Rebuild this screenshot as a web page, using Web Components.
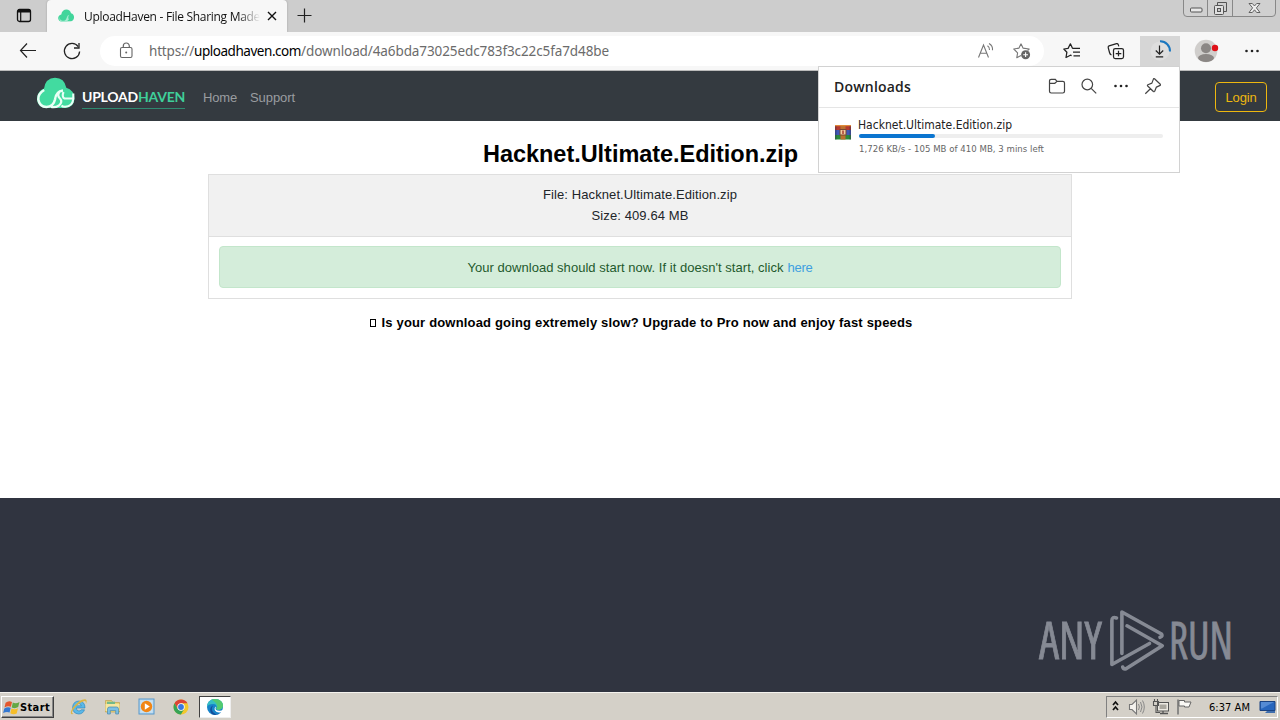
<!DOCTYPE html>
<html lang="en">
<head>
<meta charset="utf-8">
<title>UploadHaven - File Sharing Made Easy</title>
<style>
  body {
    margin: 0;
    width: 1280px;
    height: 720px;
    overflow: hidden;
    font-family: "Liberation Sans", Arial, sans-serif;
  }
</style>
</head>
<body>
<desktop-screen></desktop-screen>

<script>
// one line of text, tracked out (or in) to the given width
class FitText extends HTMLElement {
    constructor() {
        super()
        this.shadow = this.attachShadow({mode: 'open'})
    }

    connectedCallback() {
        this.shadow.innerHTML = `
        <style>
          :host { display: block; flex: none; white-space: nowrap; width: max-content; }
        </style>
        <slot></slot>`
        const w = Number(this.getAttribute('w'))
        const natural = this.getBoundingClientRect().width
        const count = this.textContent.length
        this.style.letterSpacing = (w - natural) / count + 'px'
    }
}

const ICONS = {
    tabs: `<rect x="2.5" y="2.5" width="13" height="12" rx="2" fill="none" stroke="#111" stroke-width="1.3"/><path d="M2.5 5V4a2 2 0 0 1 2-2h9a2 2 0 0 1 2 2v1.600H2.500z" fill="#111"/><path d="M5.700 5v9" stroke="#111" stroke-width="1.200"/>`,
    close: `<path d="M5 5l8 8M13 5l-8 8" stroke="#111" stroke-width="1.400"/>`,
    plus: `<path d="M8.500 1.500v14M1.500 8.500h14" stroke="#222" stroke-width="1.200"/>`,
    back: `<path d="M17 8.500H1.500M8 1.500L1.500 8.500 8 15.500" fill="none" stroke="#222" stroke-width="1.200"/>`,
    reload: `<path d="M15.200 4.600A7.600 7.600 0 1 0 16.600 9.500" fill="none" stroke="#222" stroke-width="1.300"/><path d="M16 1v5h-5" fill="none" stroke="#222" stroke-width="1.300"/>`,
    lock: `<rect x="3.500" y="5.500" width="11.500" height="10" rx="1.500" fill="none" stroke="#666" stroke-width="1.100"/><path d="M6.300 5.500V4a3 3 0 0 1 6 0v1.500" fill="none" stroke="#666" stroke-width="1.200"/><circle cx="9.200" cy="10.500" r="1" fill="#666"/>`,
    read: `<path d="M1.500 15.500L6.500 3l5 12.500M3.300 11.200h6.500" fill="none" stroke="#777" stroke-width="1.100"/><path d="M10.500 3.700q2.300 1.500 2 4.300M12 1.500q4 2.200 3.500 6.800" fill="none" stroke="#777" stroke-width="1.100"/>`,
    staradd: `<path d="M8 1.800l2 4.300 6.200.9-1.600 1.500M8 13.500l-4.200 2.200.8-4.800L.8 7l5.200-.9 2-4.300" fill="none" stroke="#777" stroke-width="1.100" stroke-linejoin="round"/><circle cx="12.600" cy="12.700" r="4.500" fill="#666"/><path d="M12.600 10.300v4.800M10.200 12.700h4.800" stroke="#fff" stroke-width="1.100"/>`,
    favs: `<path d="M9.600 6.400L7.400 1.800 5.100 6.400.8 7l3.100 3.200-.9 5.300 4.400-2.300 1.200.5M9.600 6.400H17M10 10.200h7M10.500 13.900H17" fill="none" stroke="#222" stroke-width="1.250" stroke-linejoin="round"/>`,
    collections: `<rect x="6.500" y="6.500" width="10" height="10" rx="1.800" fill="none" stroke="#222" stroke-width="1.250"/><path d="M11.500 8.700v5.600M8.700 11.500h5.600" stroke="#222" stroke-width="1.250"/><path d="M4.500 13Q3 12.500 2.500 10.500L1.200 5.500Q1 4.300 2.100 3.900L9.500 1.700q1.300-.3 1.800 1l.5 1.700" fill="none" stroke="#222" stroke-width="1.200"/>`,
    download: `<circle cx="10" cy="10" r="9.500" fill="#dedede"/><path d="M10 .3A9.700 9.700 0 0 1 20 10.500" fill="none" stroke="#1976bf" stroke-width="2"/><path d="M9.500 4.500v8.500M5.800 9.500L9.500 13.200l3.700-3.700M5.800 15.900h7.400" fill="none" stroke="#222" stroke-width="1.200"/>`,
    avatar: `<clipPath id="c"><circle cx="12" cy="12" r="11.300"/></clipPath><circle cx="12" cy="12" r="11.300" fill="#d0cecc"/><g clip-path="url(#c)" fill="#8b8785"><circle cx="12" cy="9.200" r="5"/><ellipse cx="12" cy="19" rx="8" ry="4"/></g><circle cx="21" cy="9" r="3.200" fill="#df1018"/>`,
    dots: `<g fill="#222"><circle cx="3.500" cy="9" r="1.300"/><circle cx="9" cy="9" r="1.300"/><circle cx="14.500" cy="9" r="1.300"/></g>`,
    folder: `<path d="M1.500 4.700v9.600q0 1.700 1.700 1.700h11.600q1.700 0 1.700-1.700V6q0-1.600-1.700-1.600H9L7.300 2.300H3.200q-1.700 0-1.700 1.700zM1.500 6.300h5.300L9 4.400" fill="none" stroke="#444" stroke-width="1.200"/>`,
    search: `<circle cx="7.300" cy="7.500" r="5.300" fill="none" stroke="#444" stroke-width="1.200"/><path d="M11.200 11.400l5 5" stroke="#444" stroke-width="1.300"/>`,
    pin: `<path d="M10.500 1.700l5.800 5.600q.5 1-.7 1.300l-3.200 1.500-1.700 4.200q-.5.800-1.300.2L3.700 9q-.7-.8.200-1.300l4-1.600 1.500-4q.4-.8 1.100-.4zM6.400 11.700L1.300 16.700" fill="none" stroke="#444" stroke-width="1.200" stroke-linejoin="round"/>`,
    cloud: `<path d="M8 29Q0 27.500 0 19.500 .5 12 7 9.500 8.500-.8 18-1.200 27.500-1 29.300 8.700 37 11 37.500 19.500 37 28 29 29z" fill="#42dba0"/><path d="M7.200 11Q1 14.500 1.300 20.500 2.500 27.800 9.500 28 16.500 27.500 18 20.500 19 12.500 26 11.500" fill="none" stroke="#eafff6" stroke-width="2.500"/><path d="M22.200 13Q20 17 23 19.500 26 23 22 26.500 18.500 28.800 14 28" fill="none" stroke="#eafff6" stroke-width="2.200"/><path d="M26.500 13Q24.500 18 27.500 19.500H37" fill="none" stroke="#eafff6" stroke-width="2.200"/><path d="M36.300 14.500V20Q35.500 27.500 28 27.800 25.500 27.700 24.500 26.500" fill="none" stroke="#eafff6" stroke-width="2.100"/>`,
    favicon: `<path d="M3 13.500C-1 12.500-.5 7 3.300 6.500 4-.3 12.500.3 13 5.300c4.200.8 4 7.200.2 8z" fill="#42d59b"/><path d="M3.300 7Q0 11 4 12.800q3.600.4 4.600-2.800.6-3 2.800-3.300Q9.300 9.500 11 11.300L8.500 13.800 3 13.500Q-.3 11 3.300 7z" fill="#a8ebd2"/>`,
    rar: `<path d="M1 1h16v5H1z" fill="#b5392f"/><path d="M1 6h16v5H1z" fill="#3f58b8"/><path d="M1 11h16v4.500H1z" fill="#2a8a3c"/><path d="M1 1h1.500v14.500H1zM15.500 1H17v14.500h-1.500z" fill="#343048" opacity=".4"/><path d="M6.500 1h5v14.500h-5z" fill="#b9702f"/><path d="M1 1h16v1.200H1z" fill="#e08a3a"/><rect x="6" y="5.500" width="6" height="5.500" fill="#f0cba0" stroke="#7a4630"/><path d="M8.300 6.500h1.400v3.500H8.300z" fill="#a3322a"/>`,
    windows: `<path d="M2.600 3.700Q5.800 1 9 3L7.900 7.800Q5 6.300 1.500 8.500z" fill="#e4572d"/><path d="M9.800 3.500q3 1.600 6.700-.6l-1.300 5.200Q12 10.200 8.700 8.500z" fill="#64a846"/><path d="M1.300 9.500q3.200-2.200 6.400-.8L6.600 13.500Q3.700 12 .1 14.100z" fill="#3478d1"/><path d="M8.500 9.400q3.400 1.700 6.500-.2L13.700 14.500Q10.400 16.300 7.300 14.200z" fill="#f6be29"/>`,
    ie: `<path d="M14.500 11.800Q13 16 8.700 16 2.700 15.500 2.600 9.500 3 3.200 9 3q6 .3 6 7H6.300q.1 3 2.700 3 1.500-.1 2.200-1.200zM6.400 7.800H11.300Q10.700 5.500 8.900 5.500 6.800 5.600 6.400 7.800z" fill="#5bb8e8" stroke="#2482bb" stroke-width=".6"/><path d="M1.800 16.300Q-.7 15.200 3 9.500 9.500 1 15.200 1.200q2.500.6.700 5 .3-3.500-1.500-3.200Q8 4.500 2.600 12.800q-1.500 3 .8 2.700Q2.800 16.500 1.800 16.300z" fill="#dcb544"/>`,
    explorer: `<path d="M1.500 2.500h6l1.500 2h6.500V14H1.500z" fill="#ead77c" stroke="#c2a04c" stroke-width=".7"/><path d="M3 3.700h8v6H3z" fill="#72b98a"/><path d="M1.500 6h14v7h-14z" fill="#f5e6a0"/><path d="M3.500 16v-5Q3.500 9 5.500 9h7q2 0 2 2v5h-2.800v-3.500H6.300V16z" fill="#7cc0e4" stroke="#4788ad" stroke-width=".7"/>`,
    player: `<rect x="1" y="1" width="15" height="15" fill="#b8d8ee" stroke="#5798cc"/><rect x="2.500" y="2.500" width="12" height="12" fill="#c9e2f4"/><circle cx="8.500" cy="8.500" r="5.700" fill="#f18616"/><path d="M6.800 5.300l5 3.200-5 3.200z" fill="#fff"/>`,
    chrome: `<circle cx="9" cy="9" r="7.500" fill="#f2c82d"/><path d="M2.500 5.250A7.500 7.500 0 0 1 15.500 5.250H9L5.800 10.900z" fill="#dc4436"/><path d="M2.500 5.250L5.800 10.900 9 12.800l-.1 3.700A7.500 7.500 0 0 1 2.500 5.250z" fill="#36a457"/><path d="M8.900 16.500L12.200 10.900 9 12.750 5.800 10.900z" fill="#36a457"/><circle cx="9" cy="9" r="3.700" fill="#fff"/><circle cx="9" cy="9" r="2.900" fill="#3978df"/>`,
    edge: `<circle cx="9" cy="9" r="8" fill="#1683c9"/><path d="M1 9C1 4 4.500 1 9 1c5 0 8 3 8 6.600 0 2.500-2 4.200-4.500 4.200-2 0-2.500-.8-2-1.800.7-2-.5-4-3.300-4C4 6 1.500 7 1 9z" fill="#36bfc3"/><path d="M9 1c5 0 8 3 8 6.600 0 2.500-2 4.200-4.500 4.200-2 0-2.500-.8-2-1.800 2.200-1.700-.4-6.200-5.200-8.200Q7 1 9 1z" fill="#53ca71"/><path d="M7 7.500q-3.500 5.500 2.500 8.500 3 .8 6-2.300Q12.500 17 9 17 4.500 16.500 4.200 12 4.300 8.500 7 7.500z" fill="#154d9a"/><path d="M10 8.500q-2 4.500 4 4.300 1.500 0 3-1.200l.8.900-1.800 1.500q-5 1.500-7-1.500Q7.800 10 10 8.500z" fill="#fff"/>`,
    chevrons: `<path d="M2 7l2.500-3L7 7M2 12l2.500-3L7 12" fill="none" stroke="#111" stroke-width="1.700"/>`,
    volume: `<path d="M1.500 6.500H4L8.500 2v14L4 11.500H1.500z" fill="#f4f2ee" stroke="#777" stroke-width="1.100"/><path d="M10.500 6q1.800 3 0 6M12.500 4q3 5 0 10M14.500 2.500q3.600 6.500 0 13" fill="none" stroke="#888"/>`,
    network: `<rect x="5.500" y="4.500" width="11" height="8.500" fill="#ece9e2" stroke="#555"/><rect x="7.500" y="6.500" width="7" height="4.500" fill="#aaa79f"/><path d="M8 15.500h8M11 13v2" stroke="#555" stroke-width="1.300"/><path d="M1.500 3.500h5v4h-5zM2.500 1v2.500M5.500 1v2.500M4 7.500v7h4" fill="none" stroke="#555" stroke-width="1.100"/>`,
    flag: `<path d="M3 16.500V1.500" stroke="#777" stroke-width="1.600"/><path d="M4 2.500h5.500v1.500H16L14 9H9.500V8H4z" fill="#faf9f5" stroke="#666"/>`,
    monitor: `<path d="M1 3.500h15v9H1z" fill="#2866bd" stroke="#1b4382"/><path d="M2 4h13L3 10.500H2z" fill="#558bd4"/><path d="M8 13h8v2H6z" fill="#3f6eae"/>`,
    min: `<rect x="6.500" y="8" width="11.500" height="4" rx="1" fill="#e8e8e8" stroke="#555"/>`,
    restore: `<path d="M9.500 5.500V2.500h9v9h-3" fill="none" stroke="#555"/><rect x="6.500" y="5.500" width="9" height="9" rx="1" fill="#e0e0e0" stroke="#555"/><rect x="9.500" y="8.500" width="3" height="3" fill="#ccc" stroke="#555"/>`,
    winclose: `<path d="M16 3.500h3.300l2.200 2.500L23.700 3.500H27l-3.600 4.400L27 12.500h-3.300l-2.200-2.700-2.200 2.700H16l3.600-4.600z" fill="#eee" stroke="#555" stroke-width=".9"/>`,
    anyrun: `<g fill="none" stroke="#868a94" stroke-width="3.600" stroke-linejoin="round" stroke-linecap="round"><path d="M6.500 8Q1.900 6.300 1.900 10.500V54.500L39.500 33.500"/><path d="M11.900 43.500V2L51.500 24Q53 26.500 50 27.300"/><path d="M17 15.800L52.300 35.700 16 58.800Q13.500 59.500 12.700 57"/></g>`
}

class UiIcon extends HTMLElement {
    constructor() {
        super()
        this.shadow = this.attachShadow({mode: 'open'})
    }

    connectedCallback() {
        const w = this.getAttribute('w') || 18
        const h = this.getAttribute('h') || 18
        this.shadow.innerHTML = `
        <style>
          :host { display: block; flex: none; width: ${w}px; height: ${h}px; }
          svg { display: block; overflow: visible; }
        </style>
        <svg width="${w}" height="${h}" viewBox="0 0 ${w} ${h}">${ICONS[this.getAttribute('name')]}</svg>`
    }
}

class TabStrip extends HTMLElement {
    constructor() {
        super()
        this.shadow = this.attachShadow({mode: 'open'})
    }

    connectedCallback() {
        this.shadow.innerHTML = `
        <style>
          :host { display: flex; height: 32px; background: #cdcdcd; font: 12px "Open Sans", "Noto Sans", sans-serif; color: #111; }
          .actions { width: 47px; display: flex; align-items: center; justify-content: center; }
          .tab { box-sizing: border-box; width: 240px; display: flex; align-items: center; padding: 0 7px 0 11px; background: #f7f7f7; border-radius: 4px 4px 0 0; box-shadow: 0 0 2px #999; clip-path: inset(0 -3px 0 -3px); }
          .title { width: 176px; margin: 0 3px 0 10px; -webkit-mask-image: linear-gradient(90deg, #000 154px, transparent 176px); mask-image: linear-gradient(90deg, #000 154px, transparent 176px); }
          .new { margin: 7px 0 0 9px; }
          .win { margin: -1px 4px 0 auto; height: 16px; display: flex; border: 1px solid #888; border-radius: 0 0 4px 4px; background: #d0d0d0; }
          .win ui-icon + ui-icon { border-left: 1px solid #888; }
        </style>
        <div class="actions"><ui-icon name="tabs"></ui-icon></div>
        <div class="tab">
          <ui-icon name="favicon" w="16" h="16"></ui-icon>
          <div class="title"><fit-text w="176">UploadHaven - File Sharing Made</fit-text></div>
          <ui-icon name="close"></ui-icon>
        </div>
        <ui-icon class="new" name="plus"></ui-icon>
        <div class="win">
          <ui-icon name="min" w="23" h="16"></ui-icon>
          <ui-icon name="restore" w="24" h="16"></ui-icon>
          <ui-icon name="winclose" w="42" h="16"></ui-icon>
        </div>`
    }
}

class AddressBar extends HTMLElement {
    constructor() {
        super()
        this.shadow = this.attachShadow({mode: 'open'})
    }

    connectedCallback() {
        this.shadow.innerHTML = `
        <style>
          :host { box-sizing: border-box; display: flex; align-items: center; height: 39px; padding: 0 8px; background: #f7f7f7; border-bottom: 1px solid #bbb; font: 13.500px "Noto Sans", "Open Sans", sans-serif; color: #6b6b6b; }
          .btn { width: 40px; height: 30px; display: flex; align-items: center; justify-content: center; }
          .btn + .btn { margin-left: 4px; }
          .pill { box-sizing: border-box; width: 944px; height: 30px; display: flex; align-items: center; margin: 0 8px; padding: 0 13px 0 17px; border-radius: 15px; background: #fff; }
          .url { display: flex; flex: 1; margin-left: 14px; }
          .url b { font-weight: normal; color: #000; }
          .star { margin-left: 18px; }
          .on { background: #d6d6d6; }
          .btn.me { margin-left: 6px; }
          .btn.more { margin-left: 6px; }
        </style>
        <div class="btn"><ui-icon name="back"></ui-icon></div>
        <div class="btn"><ui-icon name="reload"></ui-icon></div>
        <div class="pill">
          <ui-icon name="lock"></ui-icon>
          <div class="url">
            <fit-text w="45">https://</fit-text>
            <fit-text w="107"><b>uploadhaven.com</b></fit-text>
            <fit-text w="308">/download/4a6bda73025edc783f3c22c5fa7d48be</fit-text>
          </div>
          <ui-icon name="read"></ui-icon>
          <ui-icon class="star" name="staradd"></ui-icon>
        </div>
        <div class="btn"><ui-icon name="favs"></ui-icon></div>
        <div class="btn"><ui-icon name="collections"></ui-icon></div>
        <div class="btn on"><ui-icon name="download" w="20" h="20"></ui-icon></div>
        <div class="btn me"><ui-icon name="avatar" w="24" h="24"></ui-icon></div>
        <div class="btn more"><ui-icon name="dots"></ui-icon></div>`
    }
}

class SiteNav extends HTMLElement {
    constructor() {
        super()
        this.shadow = this.attachShadow({mode: 'open'})
    }

    connectedCallback() {
        this.shadow.innerHTML = `
        <style>
          :host { box-sizing: border-box; display: flex; align-items: center; height: 50px; padding: 0 13px 0 37px; background: #343a40; color: #9a9da0; font-size: 13px; }
          .logo { display: flex; align-items: center; margin: -3px 18px 0 0; }
          .word { display: flex; margin: 9px 0 0 7px; height: 19px; border-bottom: 1px solid #2f8a70; font: bold 14px/16px Lato, sans-serif; color: #fff; }
          .word .hv { color: #3fcf9a; }
          .links { display: flex; gap: 13px; margin-top: 3px; }
          .login { box-sizing: border-box; margin: 2px 0 0 auto; width: 52px; height: 30px; border: 1px solid #eeb70f; border-radius: 4px; display: flex; align-items: center; justify-content: center; color: #eeb70f; }
        </style>
        <div class="logo">
          <ui-icon name="cloud" w="38" h="31"></ui-icon>
          <div class="word"><fit-text w="56">UPLOAD</fit-text><fit-text class="hv" w="47">HAVEN</fit-text></div>
        </div>
        <div class="links"><fit-text w="34">Home</fit-text><fit-text w="45">Support</fit-text></div>
        <div class="login"><fit-text w="31">Login</fit-text></div>`
    }
}

class DownloadPage extends HTMLElement {
    constructor() {
        super()
        this.shadow = this.attachShadow({mode: 'open'})
    }

    connectedCallback() {
        this.shadow.innerHTML = `
        <style>
          :host { display: flex; flex-direction: column; align-items: center; height: 377px; background: #fff; color: #212529; font-size: 13px; line-height: 21px; }
          h1 { margin: 17px 0 4px 1px; font-size: 23.500px; line-height: 32px; color: #000; }
          .card { box-sizing: border-box; width: 864px; height: 125px; border: 1px solid #dfdfdf; }
          .head { box-sizing: border-box; height: 62px; padding-top: 9px; display: flex; flex-direction: column; align-items: center; background: #f1f1f1; border-bottom: 1px solid #dfdfdf; }
          .alert { box-sizing: border-box; height: 42px; margin: 9px 10px; display: flex; align-items: center; justify-content: center; gap: 4px; background: #d4edda; border: 1px solid #c3e6cb; border-radius: 4px; color: #1f5a2d; }
          .alert .link { color: #3f9fe0; }
          .tip { display: flex; align-items: center; gap: 6px; margin: 13px 0 0 2px; font-weight: bold; color: #000; }
          .tofu { box-sizing: border-box; width: 6px; height: 8px; border: 1px solid #000; }
        </style>
        <h1><fit-text w="315">Hacknet.Ultimate.Edition.zip</fit-text></h1>
        <div class="card">
          <div class="head">
            <fit-text w="194">File: Hacknet.Ultimate.Edition.zip</fit-text>
            <fit-text w="97">Size: 409.64 MB</fit-text>
          </div>
          <div class="alert">
            <fit-text w="316">Your download should start now. If it doesn't start, click</fit-text>
            <fit-text class="link" w="25">here</fit-text>
          </div>
        </div>
        <div class="tip"><span class="tofu"></span><fit-text w="531">Is your download going extremely slow? Upgrade to Pro now and enjoy fast speeds</fit-text></div>`
    }
}

class DownloadsFlyout extends HTMLElement {
    constructor() {
        super()
        this.shadow = this.attachShadow({mode: 'open'})
    }

    connectedCallback() {
        this.shadow.innerHTML = `
        <style>
          :host { box-sizing: border-box; display: block; width: 362px; height: 107px; background: #fff; border: 1px solid #d2d2d2; font-family: "DejaVu Sans Condensed", "DejaVu Sans", sans-serif; color: #222; }
          header { box-sizing: border-box; height: 41px; display: flex; align-items: center; gap: 14px; padding: 0 17px 2px 15px; border-bottom: 1px solid #e5e5e5; font: 600 14px "Open Sans", sans-serif; }
          header fit-text { margin-right: auto; }
          .row { display: flex; padding: 9px 16px 0 15px; gap: 6px; }
          .row ui-icon { margin-top: 7px; }
          .info { width: 305px; }
          .name { font-size: 12px; line-height: 16px; }
          .bar { height: 4px; margin: 1px 0 0 1px; border-radius: 2px; background: #eee; }
          .bar i { display: block; width: 76px; height: 4px; border-radius: 2px; background: #0b75d0; }
          .stat { margin: 4px 0 0 1px; font-size: 9.500px; line-height: 14px; color: #666; }
        </style>
        <header>
          <fit-text w="77">Downloads</fit-text>
          <ui-icon name="folder"></ui-icon>
          <ui-icon name="search"></ui-icon>
          <ui-icon name="dots"></ui-icon>
          <ui-icon name="pin"></ui-icon>
        </header>
        <div class="row">
          <ui-icon name="rar" w="18" h="16"></ui-icon>
          <div class="info">
            <fit-text class="name" w="154">Hacknet.Ultimate.Edition.zip</fit-text>
            <div class="bar"><i></i></div>
            <fit-text class="stat" w="185">1,726 KB/s - 105 MB of 410 MB, 3 mins left</fit-text>
          </div>
        </div>`
    }
}

class AnyRun extends HTMLElement {
    constructor() {
        super()
        this.shadow = this.attachShadow({mode: 'open'})
    }

    connectedCallback() {
        this.shadow.innerHTML = `
        <style>
          :host { display: flex; align-items: center; gap: 8px; color: #868a94; }
          svg { display: block; overflow: visible; }
          text { font: 51.500px "Open Sans", "Liberation Sans", sans-serif; font-stretch: condensed; fill: #868a94; stroke: #868a94; stroke-width: .8px; }
        </style>
        <svg width="63" height="62"><text x="0" y="49" textLength="63" lengthAdjust="spacingAndGlyphs">ANY</text></svg>
        <ui-icon name="anyrun" w="54" h="62"></ui-icon>
        <svg width="60" height="62"><text x="-3" y="49" textLength="64" lengthAdjust="spacingAndGlyphs">RUN</text></svg>`
    }
}

class TaskBar extends HTMLElement {
    constructor() {
        super()
        this.shadow = this.attachShadow({mode: 'open'})
    }

    connectedCallback() {
        this.shadow.innerHTML = `
        <style>
          :host { box-sizing: border-box; display: flex; align-items: center; height: 28px; padding: 1px 2px 0 1px; background: #d4d0c8; border-top: 1px solid #f4f2ee; font: 11px "DejaVu Sans Condensed", sans-serif; color: #000; }
          .start { box-sizing: border-box; width: 53px; height: 22px; display: flex; align-items: center; gap: 1px; padding-left: 1px; border: 1px solid; border-color: #fff #404040 #404040 #fff; box-shadow: inset -1px -1px #888; font-weight: bold; }
          .apps { display: flex; gap: 16px; margin-left: 16px; align-items: center; }
          .live { box-sizing: border-box; width: 32px; height: 22px; margin-left: -7px; display: flex; align-items: center; justify-content: center; background: #fff; border: 1px solid; border-color: #404040 #eee #eee #404040; }
          .tray { box-sizing: border-box; width: 172px; height: 22px; margin-left: auto; display: flex; align-items: center; padding-left: 4px; border: 1px solid; border-color: #808080 #fff #fff #808080; }
        </style>
        <div class="start"><ui-icon name="windows" w="16" h="17"></ui-icon><fit-text w="30">Start</fit-text></div>
        <div class="apps">
          <ui-icon name="ie"></ui-icon>
          <ui-icon name="explorer"></ui-icon>
          <ui-icon name="player"></ui-icon>
          <ui-icon name="chrome"></ui-icon>
          <div class="live"><ui-icon name="edge"></ui-icon></div>
        </div>
        <div class="tray">
          <ui-icon name="chevrons" w="9" h="18"></ui-icon>
          <ui-icon name="volume" style="margin-left:8px"></ui-icon>
          <ui-icon name="network" style="margin-left:6px"></ui-icon>
          <ui-icon name="flag" style="margin-left:5px"></ui-icon>
          <fit-text w="41" style="margin-left:16px">6:37 AM</fit-text>
          <ui-icon name="monitor" style="margin-left:9px"></ui-icon>
        </div>`
    }
}

class DesktopScreen extends HTMLElement {
    constructor() {
        super()
        this.shadow = this.attachShadow({mode: 'open'})
    }

    connectedCallback() {
        this.shadow.innerHTML = `
        <style>
          :host { position: relative; display: flex; flex-direction: column; width: 1280px; height: 720px; overflow: hidden; }
          .foot { height: 194px; background: #303440; }
          downloads-flyout { position: absolute; left: 818px; top: 66px; }
          any-run { position: absolute; left: 1039px; top: 610px; }
        </style>
        <tab-strip></tab-strip>
        <address-bar></address-bar>
        <site-nav></site-nav>
        <download-page></download-page>
        <div class="foot"></div>
        <task-bar></task-bar>
        <downloads-flyout></downloads-flyout>
        <any-run></any-run>`
    }
}

customElements.define('fit-text', FitText)
customElements.define('ui-icon', UiIcon)
customElements.define('tab-strip', TabStrip)
customElements.define('address-bar', AddressBar)
customElements.define('site-nav', SiteNav)
customElements.define('download-page', DownloadPage)
customElements.define('downloads-flyout', DownloadsFlyout)
customElements.define('any-run', AnyRun)
customElements.define('task-bar', TaskBar)
customElements.define('desktop-screen', DesktopScreen)
</script>
</body>
</html>
